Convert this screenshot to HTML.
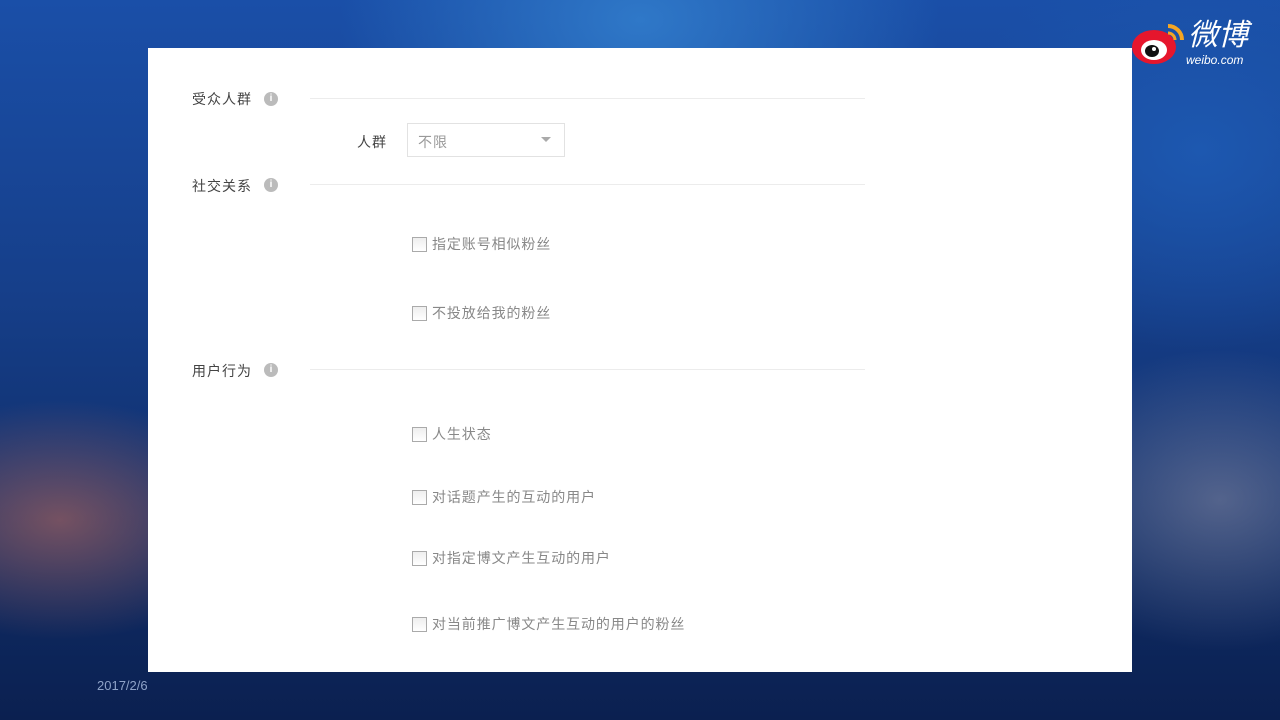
<!DOCTYPE html>
<html><head><meta charset="utf-8"><style>
body{margin:0;width:1280px;height:720px;overflow:hidden;position:relative;font-family:"Liberation Sans","Noto Sans CJK SC",sans-serif;
background:radial-gradient(ellipse 300px 200px at 640px 20px,#2f78c8 0%,transparent 100%),radial-gradient(ellipse 200px 120px at 60px 520px,rgba(200,110,90,.55),transparent),radial-gradient(ellipse 200px 150px at 1220px 500px,rgba(150,150,170,.5),transparent),radial-gradient(ellipse 250px 200px at 1200px 150px,#1d58b0,transparent),linear-gradient(180deg,#1a4fa8 0%,#163f8a 40%,#0f2d68 75%,#0b2050 100%);}
.card{position:absolute;left:148px;top:48px;width:984px;height:624px;background:#fff}
.t{position:absolute;font-size:14px;color:#444;letter-spacing:1px}
.i{position:absolute;width:14px;height:14px;border-radius:50%;background:#bbb;color:#fff;font-size:10px;font-weight:bold;text-align:center;line-height:14px}
.l{position:absolute;height:1px;background:#ececec;left:162px;width:555px}
.cb{position:absolute;width:13px;height:13px;border:1px solid #aaa;background:linear-gradient(#eee,#fff);left:264px}
.c{position:absolute;left:284px;font-size:14px;color:#888;letter-spacing:0.9px}
</style></head><body>
<div class="card">
<div class="t" style="left:44px;top:41px">受众人群</div><div class="i" style="left:116px;top:44px">i</div><div class="l" style="top:50px"></div>
<div class="t" style="left:209px;top:84px">人群</div>
<div style="position:absolute;left:259px;top:75px;width:158px;height:34px;border:1px solid #e2e2e2;box-sizing:border-box"></div>
<div class="t" style="left:270px;top:84px;color:#999">不限</div>
<div style="position:absolute;left:393px;top:89px;border:5px solid transparent;border-top:5px solid #aaa"></div>
<div class="t" style="left:44px;top:128px">社交关系</div><div class="i" style="left:116px;top:130px">i</div><div class="l" style="top:136px"></div>
<div class="cb" style="top:189px"></div><div class="c" style="top:186px">指定账号相似粉丝</div>
<div class="cb" style="top:258px"></div><div class="c" style="top:255px">不投放给我的粉丝</div>
<div class="t" style="left:44px;top:313px">用户行为</div><div class="i" style="left:116px;top:315px">i</div><div class="l" style="top:321px"></div>
<div class="cb" style="top:379px"></div><div class="c" style="top:376px">人生状态</div>
<div class="cb" style="top:442px"></div><div class="c" style="top:439px">对话题产生的互动的用户</div>
<div class="cb" style="top:503px"></div><div class="c" style="top:500px">对指定博文产生互动的用户</div>
<div class="cb" style="top:569px"></div><div class="c" style="top:566px">对当前推广博文产生互动的用户的粉丝</div>
</div>
<div style="position:absolute;left:97px;top:678px;font-size:13px;color:#8fa3c8">2017/2/6</div>
<svg style="position:absolute;left:1130px;top:20px" width="60" height="48">
<ellipse cx="24" cy="27" rx="22" ry="17" fill="#e6162d"/>
<ellipse cx="24" cy="30" rx="13" ry="10" fill="#fff"/>
<ellipse cx="22" cy="31" rx="7" ry="6" fill="#111"/>
<circle cx="24" cy="29" r="2" fill="#fff"/>
<path d="M38 6 A14 14 0 0 1 52 20" stroke="#f5a623" stroke-width="4" fill="none"/>
<path d="M38 13 A7 7 0 0 1 45 20" stroke="#f5a623" stroke-width="3" fill="none"/>
</svg>
<div style="position:absolute;left:1188px;top:20px;font-size:30px;color:#fff;font-style:italic;line-height:32px">微博</div>
<div style="position:absolute;left:1186px;top:53px;font-size:12px;color:#fff;font-style:italic">weibo.com</div>
</body></html>
